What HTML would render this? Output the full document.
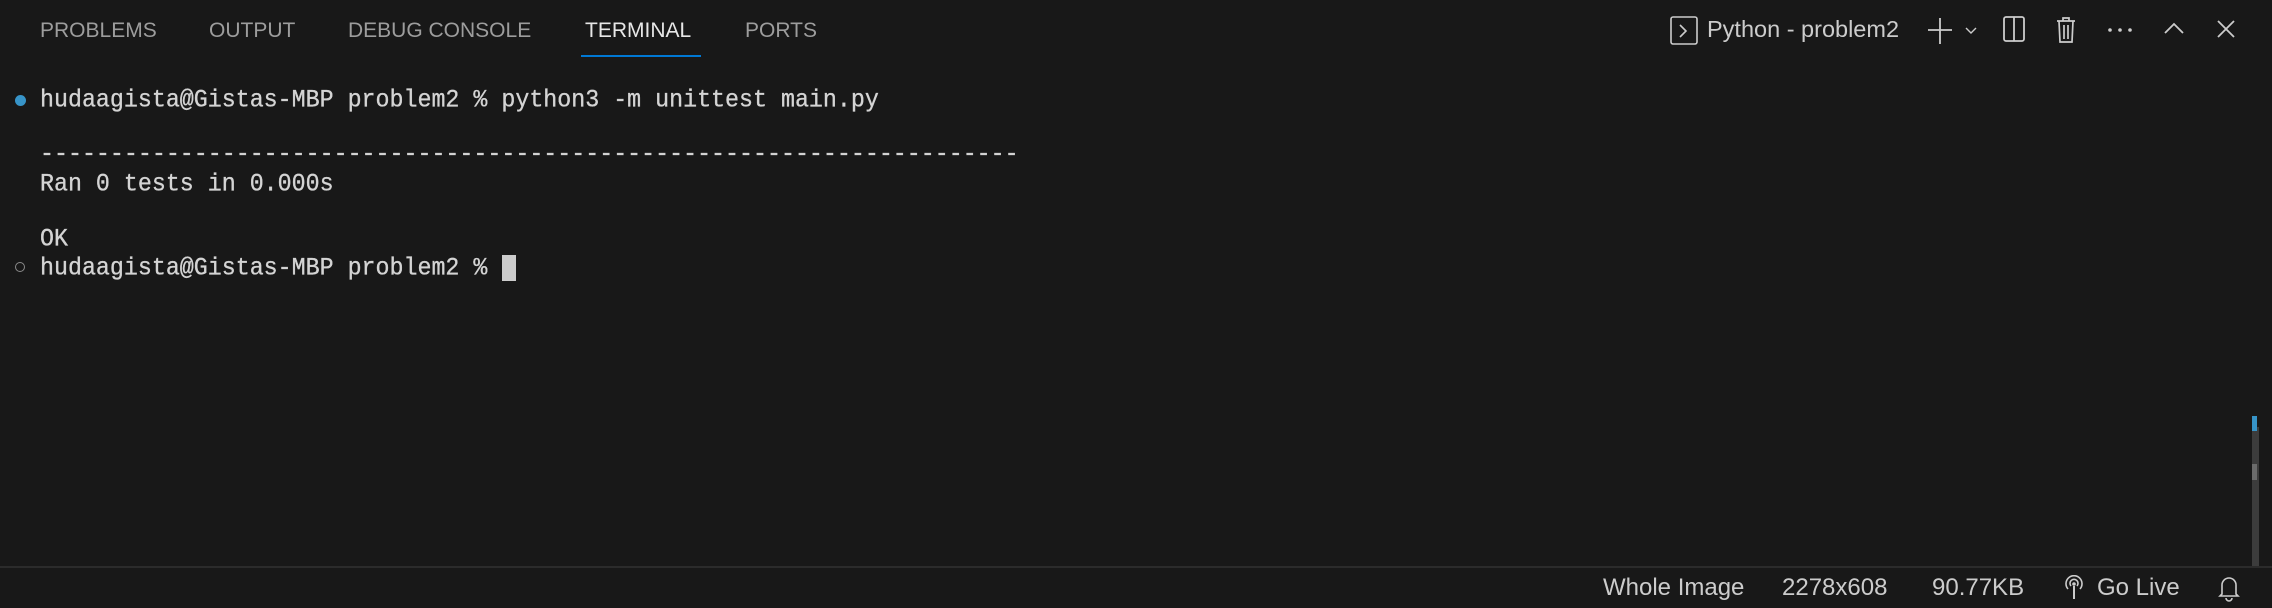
<!DOCTYPE html>
<html><head><meta charset="utf-8"><style>
body{margin:0;width:2272px;height:608px;background:#181818;overflow:hidden;position:relative;font-family:"Liberation Sans",sans-serif;}
.tab{position:absolute;top:19px;font-size:21px;color:#9d9d9d;}
.mono{position:absolute;left:40px;font-family:"Liberation Mono",monospace;font-size:23.3px;color:#d4d4d4;white-space:pre;line-height:28px;transform:scaleY(1.08);transform-origin:left top;-webkit-text-stroke:0.3px #d4d4d4}
.st{position:absolute;top:574px;font-size:24px;color:#cccccc}
svg{position:absolute}
</style></head><body>
<div class="tab" style="left:40px">PROBLEMS</div>
<div class="tab" style="left:209px">OUTPUT</div>
<div class="tab" style="left:348px">DEBUG CONSOLE</div>
<div class="tab" style="left:585px;color:#e7e7e7">TERMINAL</div>
<div class="tab" style="left:745px">PORTS</div>
<div style="position:absolute;left:581px;top:55px;width:120px;height:2px;background:#0078d4"></div>

<div style="position:absolute;left:15px;top:95px;width:11px;height:11px;border-radius:50%;background:#3794c8"></div>
<div style="position:absolute;left:15px;top:262px;width:8px;height:8px;border-radius:50%;border:1.5px solid #8a8a8a"></div>
<div class="mono" style="top:85px">hudaagista@Gistas-MBP problem2 % python3 -m unittest main.py</div>
<div class="mono" style="top:139px">----------------------------------------------------------------------</div>
<div class="mono" style="top:169px">Ran 0 tests in 0.000s</div>
<div class="mono" style="top:224px">OK</div>
<div class="mono" style="top:253px">hudaagista@Gistas-MBP problem2 % </div>
<div style="position:absolute;left:502px;top:255px;width:14px;height:26px;background:#cccccc"></div>

<svg style="left:1670px;top:16px" width="28" height="30" viewBox="0 0 28 30"><rect x="1" y="1" width="26" height="27" rx="2" fill="none" stroke="#ccc" stroke-width="1.6"/><path d="M10 9l6 6-6 6" fill="none" stroke="#ccc" stroke-width="1.6"/></svg>
<div style="position:absolute;left:1707px;top:16px;font-size:23.5px;color:#cccccc">Python - problem2</div>
<svg style="left:1925px;top:16px" width="66" height="30" viewBox="0 0 66 30"><path d="M3 14h24M15 2v26" stroke="#ccc" stroke-width="1.8"/><path d="M41 12l5 5 5-5" fill="none" stroke="#ccc" stroke-width="1.4"/></svg>
<svg style="left:2003px;top:16px" width="26" height="28" viewBox="0 0 26 28"><rect x="1" y="1" width="20" height="24" rx="2" fill="none" stroke="#ccc" stroke-width="1.8"/><path d="M11 1v24" stroke="#ccc" stroke-width="1.8"/></svg>
<svg style="left:2055px;top:15px" width="24" height="30" viewBox="0 0 24 30"><path d="M2 6h18M8 6V3h6v3M4 6l1 21h12l1-21M9 10v14M13 10v14" fill="none" stroke="#ccc" stroke-width="1.7"/></svg>
<svg style="left:2105px;top:22px" width="30" height="16" viewBox="0 0 30 16"><circle cx="5" cy="8" r="1.8" fill="#ccc"/><circle cx="15" cy="8" r="1.8" fill="#ccc"/><circle cx="25" cy="8" r="1.8" fill="#ccc"/></svg>
<svg style="left:2162px;top:18px" width="24" height="20" viewBox="0 0 24 20"><path d="M3 15l9-9 9 9" fill="none" stroke="#ccc" stroke-width="1.8"/></svg>
<svg style="left:2214px;top:17px" width="24" height="24" viewBox="0 0 24 24"><path d="M4 4l16 16M20 4L4 20" stroke="#ccc" stroke-width="1.8"/></svg>

<div style="position:absolute;left:2252px;top:427px;width:7px;height:139px;background:#3c3c3c"></div>
<div style="position:absolute;left:2252px;top:416px;width:5px;height:15px;background:#3794c8"></div>
<div style="position:absolute;left:2252px;top:464px;width:5px;height:16px;background:#6b6b6b"></div>

<div style="position:absolute;left:0;top:566px;width:2272px;height:42px;background:#181818;border-top:2px solid #2b2b2b;box-sizing:border-box"></div>
<div class="st" style="left:1603px">Whole Image</div>
<div class="st" style="left:1782px">2278x608</div>
<div class="st" style="left:1932px">90.77KB</div>
<svg style="left:2064px;top:575px" width="20" height="26" viewBox="0 0 20 26"><path d="M4 14a8 8 0 1 1 12 0M7 11a4 4 0 1 1 6 0" fill="none" stroke="#ccc" stroke-width="1.6"/><circle cx="10" cy="9" r="1.8" fill="#ccc"/><path d="M10 11v13" stroke="#ccc" stroke-width="2"/></svg>
<div class="st" style="left:2097px">Go Live</div>
<svg style="left:2218px;top:574px" width="22" height="28" viewBox="0 0 22 28"><path d="M4 20V11a7 7 0 0 1 14 0v9l2 2H2z" fill="none" stroke="#ccc" stroke-width="1.6"/><path d="M8 24a3 3 0 0 0 6 0" fill="none" stroke="#ccc" stroke-width="1.6"/></svg>
</body></html>
